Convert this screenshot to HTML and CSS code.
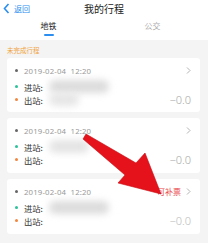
FILE: index.html
```html
<!DOCTYPE html>
<html lang="zh">
<head>
<meta charset="utf-8">
<link rel="stylesheet" href="styles.css">
</head>
<body>
<div class="page">
  <header class="header">
    <div class="back">
      <svg class="back-icon" width="7" height="11" viewBox="0 0 7 11"><path d="M5.5 1 L1.5 5.5 L5.5 10" fill="none" stroke="#2b8ef0" stroke-width="1.6"/></svg>
      <span>返回</span>
    </div>
    <div class="title">我的行程</div>
    <div></div>
  </header>
  <nav class="tabs">
    <div class="tab active">地铁<i class="bar"></i></div>
    <div class="tab">公交</div>
  </nav>
  <main class="content">
    <div class="section-title">未完成行程</div>
    <div class="card">
      <div class="row">
        <i class="dot grey"></i><span class="date">2019-02-04&nbsp;&nbsp;12:20</span>
        <span class="right"><svg class="chev" width="5" height="7" viewBox="0 0 5 7"><path d="M1 0.5 L4 3.5 L1 6.5" fill="none" stroke="#aaa" stroke-width="0.9"/></svg></span>
      </div>
      <div class="row"><i class="dot green"></i><span class="label">进站:</span><span class="blur b1"></span></div>
      <div class="row"><i class="dot orange"></i><span class="label">出站:</span><span class="blur b2"></span><span class="right amount">−0.0</span></div>
    </div>
    <div class="card">
      <div class="row">
        <i class="dot grey"></i><span class="date">2019-02-04&nbsp;&nbsp;12:20</span>
        <span class="right"><svg class="chev" width="5" height="7" viewBox="0 0 5 7"><path d="M1 0.5 L4 3.5 L1 6.5" fill="none" stroke="#aaa" stroke-width="0.9"/></svg></span>
      </div>
      <div class="row"><i class="dot green"></i><span class="label">进站:</span><span class="blur b3"></span></div>
      <div class="row"><i class="dot orange"></i><span class="label">出站:</span><span class="right amount">−0.0</span></div>
    </div>
    <div class="card">
      <div class="row">
        <i class="dot grey"></i><span class="date">2019-02-04&nbsp;&nbsp;12:20</span>
        <span class="right"><span class="refill">可补票</span><svg class="chev" width="5" height="7" viewBox="0 0 5 7"><path d="M1 0.5 L4 3.5 L1 6.5" fill="none" stroke="#aaa" stroke-width="0.9"/></svg></span>
      </div>
      <div class="row"><i class="dot green"></i><span class="label">进站:</span><span class="blur b1"></span></div>
      <div class="row"><i class="dot orange"></i><span class="label">出站:</span><span class="right amount faint">−0.0</span></div>
    </div>
  </main>
  <svg class="arrow" width="208" height="243" viewBox="0 0 208 243">
    <polygon points="86,134 83,139 125,175 118,183 161,194 145,153 136,163" fill="#e5121b" stroke="#c40d14" stroke-width="0.6"/>
  </svg>
</div>
</body>
</html>
```
FILE: styles.css
```css
* { box-sizing: border-box; margin: 0; padding: 0; }
html, body { width: 208px; height: 243px; overflow: hidden; }
body {
  font-family: "Noto Sans CJK SC", "Noto Sans", sans-serif;
  background: #f4f4f4;
  color: #333;
}
.page { position: relative; width: 208px; height: 243px; }
.header {
  height: 17px;
  background: #fff;
  display: grid;
  grid-template-columns: 1fr auto 1fr;
  align-items: center;
}
.back {
  display: flex;
  align-items: center;
  gap: 4px;
  padding-left: 3px;
  color: #2b8ef0;
  font-size: 8px;
  line-height: 10px;
}
.back-icon { display: block; }
.title { font-size: 10px; line-height: 12px; color: #222; padding-top: 1px; }
.tabs {
  height: 23px;
  background: #fff;
  display: grid;
  grid-template-columns: 97px 1fr;
}
.tab {
  position: relative;
  text-align: center;
  font-size: 8px;
  line-height: 10px;
  padding-top: 4px;
  color: #aaa;
}
.tab.active { color: #222; }
.bar {
  display: block;
  width: 10px;
  height: 2px;
  border-radius: 1px;
  background: #2b8ef0;
  margin: 3px auto 0;
}
.content { padding: 0 8px 0 7px; }
.section-title {
  font-size: 6.5px;
  line-height: 8px;
  color: #f0a33c;
  padding: 6px 0 4px;
}
.card {
  background: #fff;
  border-radius: 3px;
  padding: 6px 9px 6px 8px;
  margin-bottom: 6px;
  height: 54px;
}
.card + .card { height: 55px; }
.row {
  display: flex;
  align-items: center;
  height: 13px;
}
.row + .row { margin-top: 3px; }
.row:last-child { margin-top: 0; }
.dot {
  width: 3px;
  height: 3px;
  border-radius: 50%;
  margin-right: 6px;
  flex: none;
}
.dot.grey { background: #666; }
.dot.green { background: #2cc29c; }
.dot.orange { background: #f2863e; }
.date {
  font-family: "Noto Sans", sans-serif;
  font-size: 7.8px;
  color: #999;
  letter-spacing: 0.15px;
}
.label { font-size: 8.3px; color: #333; }
.right {
  margin-left: auto;
  display: flex;
  align-items: center;
  gap: 5px;
}
.chev { display: block; }
.refill { font-size: 8px; color: #e8474a; }
.amount {
  font-family: "Noto Sans", sans-serif;
  font-weight: 300;
  font-size: 11px;
  color: #a8a8a8;
  line-height: 13px;
}
.amount.faint { color: #bbb; }
.blur {
  display: inline-block;
  height: 13px;
  margin-left: 6px;
  background: #dcdcdc;
  border-radius: 6px;
  filter: blur(3.5px);
}
.b1 { width: 60px; }
.b2 { width: 30px; background: #e6e6e6; }
.b3 { width: 40px; background: #e4e4e4; }
.arrow { position: absolute; left: 0; top: 0; pointer-events: none; }
```
